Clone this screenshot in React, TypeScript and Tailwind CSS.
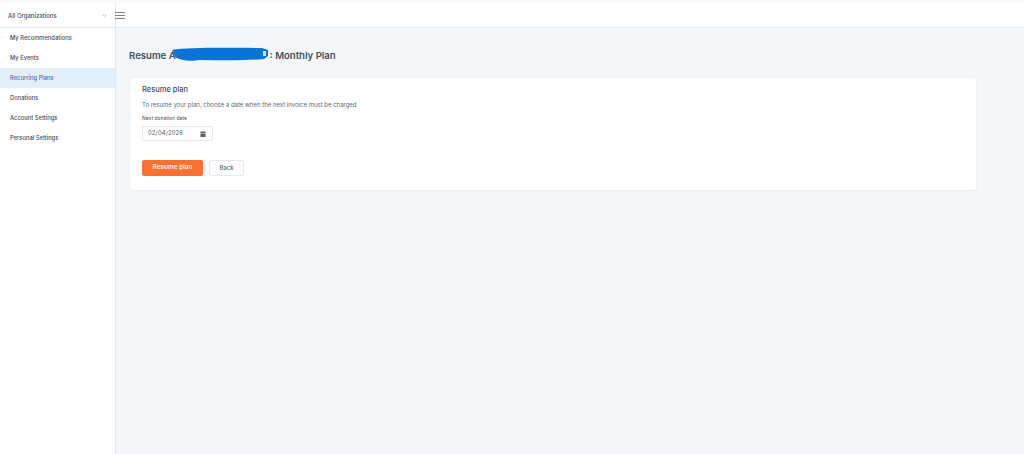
import { ChevronDown } from 'lucide-react';

const navItems = ['My Recommendations', 'My Events', 'Recurring Plans', 'Donations', 'Account Settings', 'Personal Settings'];

export default function App() {
  return (
    <div className="h-[454px] w-[1024px] overflow-hidden bg-white font-['Inter',sans-serif] text-[#3f4f5f]">
      <div className="h-[3px] bg-[#f9f9f9]" />
      <header className="flex h-[25px] border-b border-[#e4e9ee]">
        <div className="flex w-[116px] items-center justify-between border-r border-[#e4e9ee] pl-[8px] pr-[7px]">
          <span className="text-[6px] font-medium">All Organizations</span>
          <ChevronDown className="h-[7px] w-[7px] text-[#8a95a1]" />
        </div>
        <div className="flex h-[24px] items-center">
          <div className="flex w-[10px] -translate-x-px flex-col gap-[2px]">
            <div className="h-px bg-[#7a838c]" />
            <div className="h-px bg-[#7a838c]" />
            <div className="h-px bg-[#7a838c]" />
          </div>
        </div>
      </header>
      <div className="flex h-[426px]">
        <nav className="w-[116px] border-r border-[#e4e9ee]">
          {navItems.map((item) => (
            <div
              key={item}
              className={
                item === 'Recurring Plans'
                  ? 'flex h-[20px] items-center bg-[#e3eefb] pl-[10px] text-[5.8px] font-medium text-[#4a6fb5]'
                  : 'flex h-[20px] items-center pl-[10px] text-[5.8px] font-medium'
              }
            >
              {item}
            </div>
          ))}
        </nav>
        <main className="flex-1 bg-[#f3f7fa] pl-[13px] pr-[47px] pt-[21px]">
          <h1 className="relative flex h-[14px] items-center text-[9.6px] font-semibold leading-[14px]">
            <span>Resume A</span>
            <span className="w-[94px]" />
            <span>: Monthly Plan</span>
            {/* scribble that hides the plan name */}
            <svg className="absolute left-[41px] top-[-2px]" width="100" height="16" viewBox="0 0 100 16">
              <path d="M2 3 C20 0 60 1 92 1 L98 3 L98 9 L94 12 C70 14 50 13 30 13 C20 15 10 13 5 10 Z" fill="#0a74d6" />
              <path d="M93 4 L96 4 L96 9 L93 9 Z" fill="#dbe7f2" />
            </svg>
          </h1>
          <section className="mt-[14px] h-[114px] rounded-[2px] border border-[#edf0f4] bg-white pl-[12px] pt-[7px]">
            <h2 className="text-[7.5px] font-medium leading-[10px]">Resume plan</h2>
            <p className="mt-[6px] text-[6px] leading-[8px] text-[#5a6b7b]">To resume your plan, choose a date when the next invoice must be charged</p>
            <label className="mt-[6px] block text-[5px] leading-[7px]">Next donation date</label>
            <div className="mt-[4px] flex h-[15px] w-[71px] items-center justify-between rounded-[2px] border border-[#e4e9ee] pl-[5px] pr-[6px] text-[5.8px] text-[#4d5b69]">
              <span className="tracking-[0.2px]">02/04/2026</span>
              <svg width="6" height="6" viewBox="0 0 6 6">
                <path d="M1.5 0h.8v.8h1.4V0h.8v.8h1v1.2H.5V.8h1zM.5 2.5h5V6h-5z" fill="#59636d" />
              </svg>
            </div>
            <div className="mt-[19px] flex gap-[6px]">
              <button className="h-[16px] w-[61px] rounded-[2px] bg-[#f97030] text-[6.5px] font-medium text-white">Resume plan</button>
              <button className="h-[16px] w-[35px] rounded-[2px] border border-[#e4e9ee] pb-[2px] text-[6px] font-medium text-[#5a6b7b]">Back</button>
            </div>
          </section>
        </main>
      </div>
    </div>
  );
}
